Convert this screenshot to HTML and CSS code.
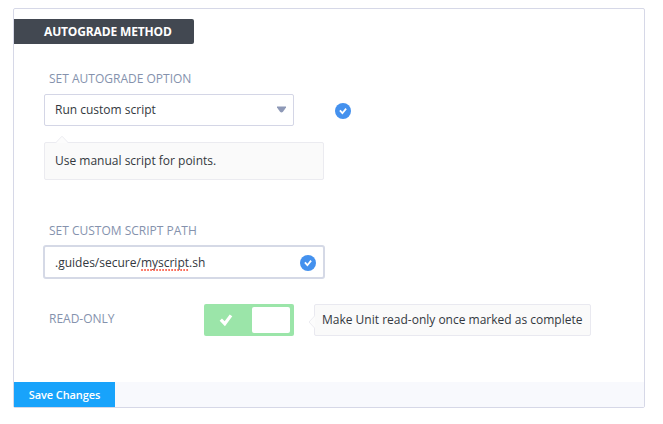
FILE: index.html
```html
<!DOCTYPE html>
<html lang="en">
<head>
<meta charset="utf-8">
<title>Autograde Method</title>
<link rel="stylesheet" href="styles.css">
</head>
<body>
<form class="panel">
  <h2 class="panel-title"><span>AUTOGRADE METHOD</span></h2>
  <div class="panel-body">
    <div class="label"><span class="label-option">SET AUTOGRADE OPTION</span></div>
    <div class="select-row">
      <div class="select"><span class="select-text">Run custom script</span>
        <svg class="caret" width="9" height="7" viewBox="0 0 9 7"><path d="M0 0.5h9v1L6 5.7Q4.5 7.2 3 5.7L0 1.5Z" fill="#8e99b7"/></svg>
      </div>
      <svg class="status" width="16" height="16" viewBox="0 0 16 16"><circle cx="8" cy="8" r="8" fill="#4491ee"/><path d="M4.9 7.4l2.5 2.8L11.1 5.6" fill="none" stroke="#fff" stroke-width="1.8"/></svg>
    </div>
    <div class="hint"><span class="hint-text">Use manual script for points.</span>
      <svg class="notch-top" width="14" height="8" viewBox="0 0 14 8"><path d="M0.5 8L7 1.2L13.5 8" fill="#fcfcfc" stroke="#ececf1"/></svg>
    </div>
    <div class="label label-path"><span class="path-label">SET CUSTOM SCRIPT PATH</span></div>
    <div class="input"><span class="input-text">.guides/secure/<span class="misspelled">myscript<svg class="squiggle" width="48" height="2" viewBox="0 0 48 2"><path d="M1 1H47" stroke="#fb5741" stroke-width="2" stroke-linecap="round" stroke-dasharray="0.01 3"/></svg></span>.sh</span>
      <svg class="status" width="16" height="16" viewBox="0 0 16 16"><circle cx="8" cy="8" r="8" fill="#4491ee"/><path d="M4.9 7.4l2.5 2.8L11.1 5.6" fill="none" stroke="#fff" stroke-width="1.8"/></svg>
    </div>
    <div class="toggle-row">
      <div class="label toggle-label"><span class="readonly-label">READ-ONLY</span></div>
      <div class="toggle">
        <svg width="14" height="14" viewBox="0 0 14 14"><path d="M1.8 6.6L5.8 10.7L12 2.4" fill="none" stroke="#fff" stroke-width="3.2"/></svg>
        <span class="knob"></span>
      </div>
      <div class="tip"><span class="tip-text">Make Unit read-only once marked as complete</span>
        <svg class="notch-left" width="7" height="14" viewBox="0 0 7 14"><path d="M7 0.5L1 7L7 13.5" fill="#fcfcfc" stroke="#ececf1"/></svg>
      </div>
    </div>
  </div>
  <div class="panel-footer"><button class="save" type="button"><span>Save Changes</span></button></div>
</form>
</body>
</html>
```
FILE: styles.css
```css
* { box-sizing: border-box; }
body {
  margin: 0;
  padding: 8px 0 0 13px;
  background: #fff;
  color: #333840;
  font: 12px/16px "Open Sans", sans-serif;
}
svg { display: block; flex: none; }
.panel {
  display: flex;
  flex-direction: column;
  width: 632px;
  height: 400px;
  border: 1px solid #d6d8e7;
  border-radius: 2px;
}
.panel-title {
  display: flex;
  align-items: center;
  width: 180px;
  height: 25px;
  margin: 10px 0 0;
  padding-left: 30px;
  border-radius: 0 2px 2px 0;
  background: #424851;
  color: #fff;
  font-size: 12px;
  font-weight: 700;
  letter-spacing: -0.15px;
  white-space: nowrap;
}
.panel-body { flex: 1; padding: 27px 0 0 30px; }
.label { height: 16px; padding-left: 5px; color: #8592ad; white-space: nowrap; }
.select-row { display: flex; align-items: center; gap: 41px; margin-top: 7px; }
.select {
  display: flex;
  align-items: center;
  justify-content: space-between;
  width: 250px;
  height: 32px;
  padding: 0 7px 0 10px;
  border: 1px solid #d4d6e6;
  border-radius: 2px;
}
.caret { margin-top: -2px; }
.select-row .status { margin-top: 2px; }
.hint {
  position: relative;
  display: flex;
  align-items: center;
  width: 280px;
  height: 38px;
  margin-top: 16px;
  padding-left: 10px;
  border: 1px solid #ebebf0;
  border-radius: 2px;
  background: #fafafa;
}
.notch-top { position: absolute; left: 10px; top: -8px; }
.label-path { margin-top: 43px; }
.input {
  display: flex;
  align-items: center;
  justify-content: space-between;
  width: 282px;
  height: 34px;
  margin: 6px 0 0 -1px;
  padding: 2px 7px 0 10px;
  border: 2px solid #d5d9e6;
  border-radius: 3px;
}
.misspelled { position: relative; }
.squiggle { position: absolute; left: 0; bottom: 0; }
.toggle-row { display: flex; align-items: center; margin-top: 25px; }
.toggle-label { width: 160px; margin-top: -3px; }
.toggle {
  display: flex;
  align-items: center;
  justify-content: space-between;
  width: 90px;
  height: 32px;
  padding: 0 4px 0 15px;
  border-radius: 2px;
  background: #9be5a9;
}
.knob { width: 38px; height: 26px; border-radius: 2px; background: #fff; }
.tip {
  position: relative;
  display: flex;
  align-items: center;
  width: 277px;
  height: 32px;
  margin-left: 20px;
  padding-left: 7px;
  border: 1px solid #e9e9f0;
  border-radius: 2px;
  background: #fafafa;
  white-space: nowrap;
}
.notch-left { position: absolute; left: -7px; top: 10px; }
.panel-footer { height: 25px; background: #f8f9fd; }
.save {
  display: block;
  width: 101px;
  height: 25px;
  padding: 0;
  border: 0;
  background: #18a3fb;
  color: #fff;
  font: 600 11px/25px "Open Sans", sans-serif;
  letter-spacing: -0.1px;
}
```
